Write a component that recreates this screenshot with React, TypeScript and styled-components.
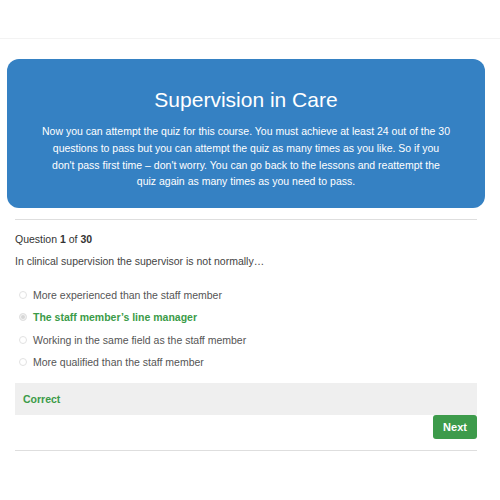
import React, { FC } from 'react'
import styled, { createGlobalStyle } from 'styled-components'

const GlobalStyle = createGlobalStyle`
  body {
    margin: 0;
    background: #ffffff;
    font-family: "Liberation Sans", Arial, sans-serif;
  }
`

const Page = styled.div`
  width: 500px;
  height: 500px;
  overflow: hidden;
`

const TopBar = styled.div`
  height: 38px;
  border-bottom: 1px solid #f3f3f3;
`

const Banner = styled.div`
  margin: 20px 15px 0 7px;
  height: 149px;
  box-sizing: border-box;
  background: #3581c3;
  border-radius: 12px;
  color: #ffffff;
  text-align: center;
  padding: 29px 30px 0;
`

const Title = styled.h1`
  margin: 0 0 11px;
  font-size: 21px;
  font-weight: 400;
  line-height: 24px;
`

const Intro = styled.p`
  margin: 0 auto;
  max-width: 409px;
  font-size: 10.5px;
  line-height: 16.8px;
`

const Content = styled.div`
  margin: 0 23px 0 15px;
`

const Rule = styled.hr`
  margin: 11px 0 0;
  border: 0;
  border-top: 1px solid #dedede;
`

const QuestionMeta = styled.div`
  margin-top: 13px;
  font-size: 10.5px;
  color: #333333;
  b {
    font-weight: 700;
  }
`

const QuestionText = styled.div`
  margin-top: 10px;
  font-size: 10.5px;
  color: #444444;
`

const Options = styled.ul`
  list-style: none;
  margin: 21px 0 0;
  padding: 0;
  display: flex;
  flex-direction: column;
  gap: 9px;
`

const Option = styled.li<{ $correct?: boolean }>`
  display: flex;
  align-items: center;
  gap: 6px;
  height: 13.5px;
  padding-left: 4px;
  font-size: 10.5px;
  font-weight: ${p => (p.$correct ? 700 : 400)};
  color: ${p => (p.$correct ? '#3b9b48' : '#555555')};
`

const Radio = styled.span<{ $checked?: boolean }>`
  width: 6px;
  height: 6px;
  border-radius: 50%;
  border: 1px solid #e2e2e2;
  background: ${p => (p.$checked ? '#d6d6d6' : '#ffffff')};
  box-shadow: ${p => (p.$checked ? 'inset 0 0 0 1px #f4f4f4' : 'none')};
`

const Feedback = styled.div`
  margin-top: 14px;
  height: 32px;
  background: #efefef;
  display: flex;
  align-items: center;
  padding: 0 8px;
  font-size: 10.5px;
  font-weight: 700;
  color: #3b9b48;
`

const Actions = styled.div`
  display: flex;
  justify-content: flex-end;
  padding-bottom: 11px;
  border-bottom: 1px solid #dedede;
`

const NextButton = styled.button`
  width: 44px;
  height: 24px;
  padding: 0;
  border: 0;
  border-radius: 3px;
  background: #3d9b4b;
  color: #ffffff;
  font-family: "Liberation Sans", Arial, sans-serif;
  font-size: 11px;
  font-weight: 700;
`

const options = [
  { label: 'More experienced than the staff member' },
  { label: 'The staff member’s line manager', correct: true },
  { label: 'Working in the same field as the staff member' },
  { label: 'More qualified than the staff member' },
]

const App: FC = () => (
  <Page>
    <GlobalStyle />
    <TopBar />
    <Banner>
      <Title>Supervision in Care</Title>
      <Intro>
        Now you can attempt the quiz for this course. You must achieve at least 24 out of the 30
        questions to pass but you can attempt the quiz as many times as you like. So if you
        don't pass first time – don't worry. You can go back to the lessons and reattempt the
        quiz again as many times as you need to pass.
      </Intro>
    </Banner>
    <Content>
      <Rule />
      <QuestionMeta>
        Question <b>1</b> of <b>30</b>
      </QuestionMeta>
      <QuestionText>In clinical supervision the supervisor is not normally…</QuestionText>
      <Options>
        {options.map(o => (
          <Option key={o.label} $correct={o.correct}>
            <Radio $checked={o.correct} />
            {o.label}
          </Option>
        ))}
      </Options>
      <Feedback>Correct</Feedback>
      <Actions>
        <NextButton>Next</NextButton>
      </Actions>
    </Content>
  </Page>
)

export default App
